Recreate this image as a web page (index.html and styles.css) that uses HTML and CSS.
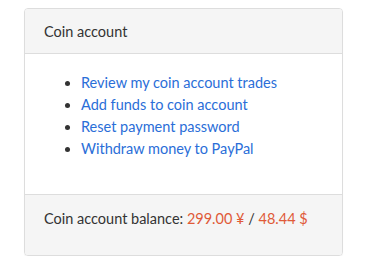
FILE: index.html
```html
<!DOCTYPE html>
<html lang="en">

<head>
  <meta charset="UTF-8">
  <meta name="viewport" content="width=device-width, initial-scale=1.0">
  <title>Coin account</title>
  <link rel="stylesheet" href="styles.css">
</head>

<body>
  <div class="panel">
    <div class="panel-heading">Coin account</div>
    <div class="panel-body">
      <ul class="actions">
        <li><a href="#">Review my coin account trades</a></li>
        <li><a href="#">Add funds to coin account</a></li>
        <li><a href="#">Reset payment password</a></li>
        <li><a href="#">Withdraw money to PayPal</a></li>
      </ul>
    </div>
    <div class="panel-footer">
      <p>Coin account balance: <span class="amount">299.00 ¥</span> / <span class="amount">48.44 $</span></p>
    </div>
  </div>
</body>

</html>
```

FILE: styles.css
```css
body {
  margin: 0;
  padding: 8px 37px 0 24px;
  font-family: Lato, "Noto Sans", sans-serif;
  font-size: 14.5px;
  line-height: 21px;
  color: #333;
  background: #fff;
}

.panel {
  border: 1px solid #ddd;
  border-radius: 4px;
  box-shadow: 0 1px 1px rgba(0, 0, 0, 0.05);
  overflow: hidden;
}

.panel-heading {
  padding: 12px 19px 11px;
  background-color: #f5f5f5;
  border-bottom: 1px solid #ddd;
}

.panel-body {
  padding: 18px 19px 12px;
  height: 110px;
}

.actions {
  margin: 0;
  padding-left: 37px;
  line-height: 22px;
}

.actions a {
  color: #2a6ed8;
  text-decoration: none;
}

.actions a:hover {
  text-decoration: underline;
}

.panel-footer {
  padding: 13px 19px 26px;
  background-color: #f5f5f5;
  border-top: 1px solid #ddd;
}

.panel-footer p {
  margin: 0;
}

.amount {
  color: #e05a38;
}
```
